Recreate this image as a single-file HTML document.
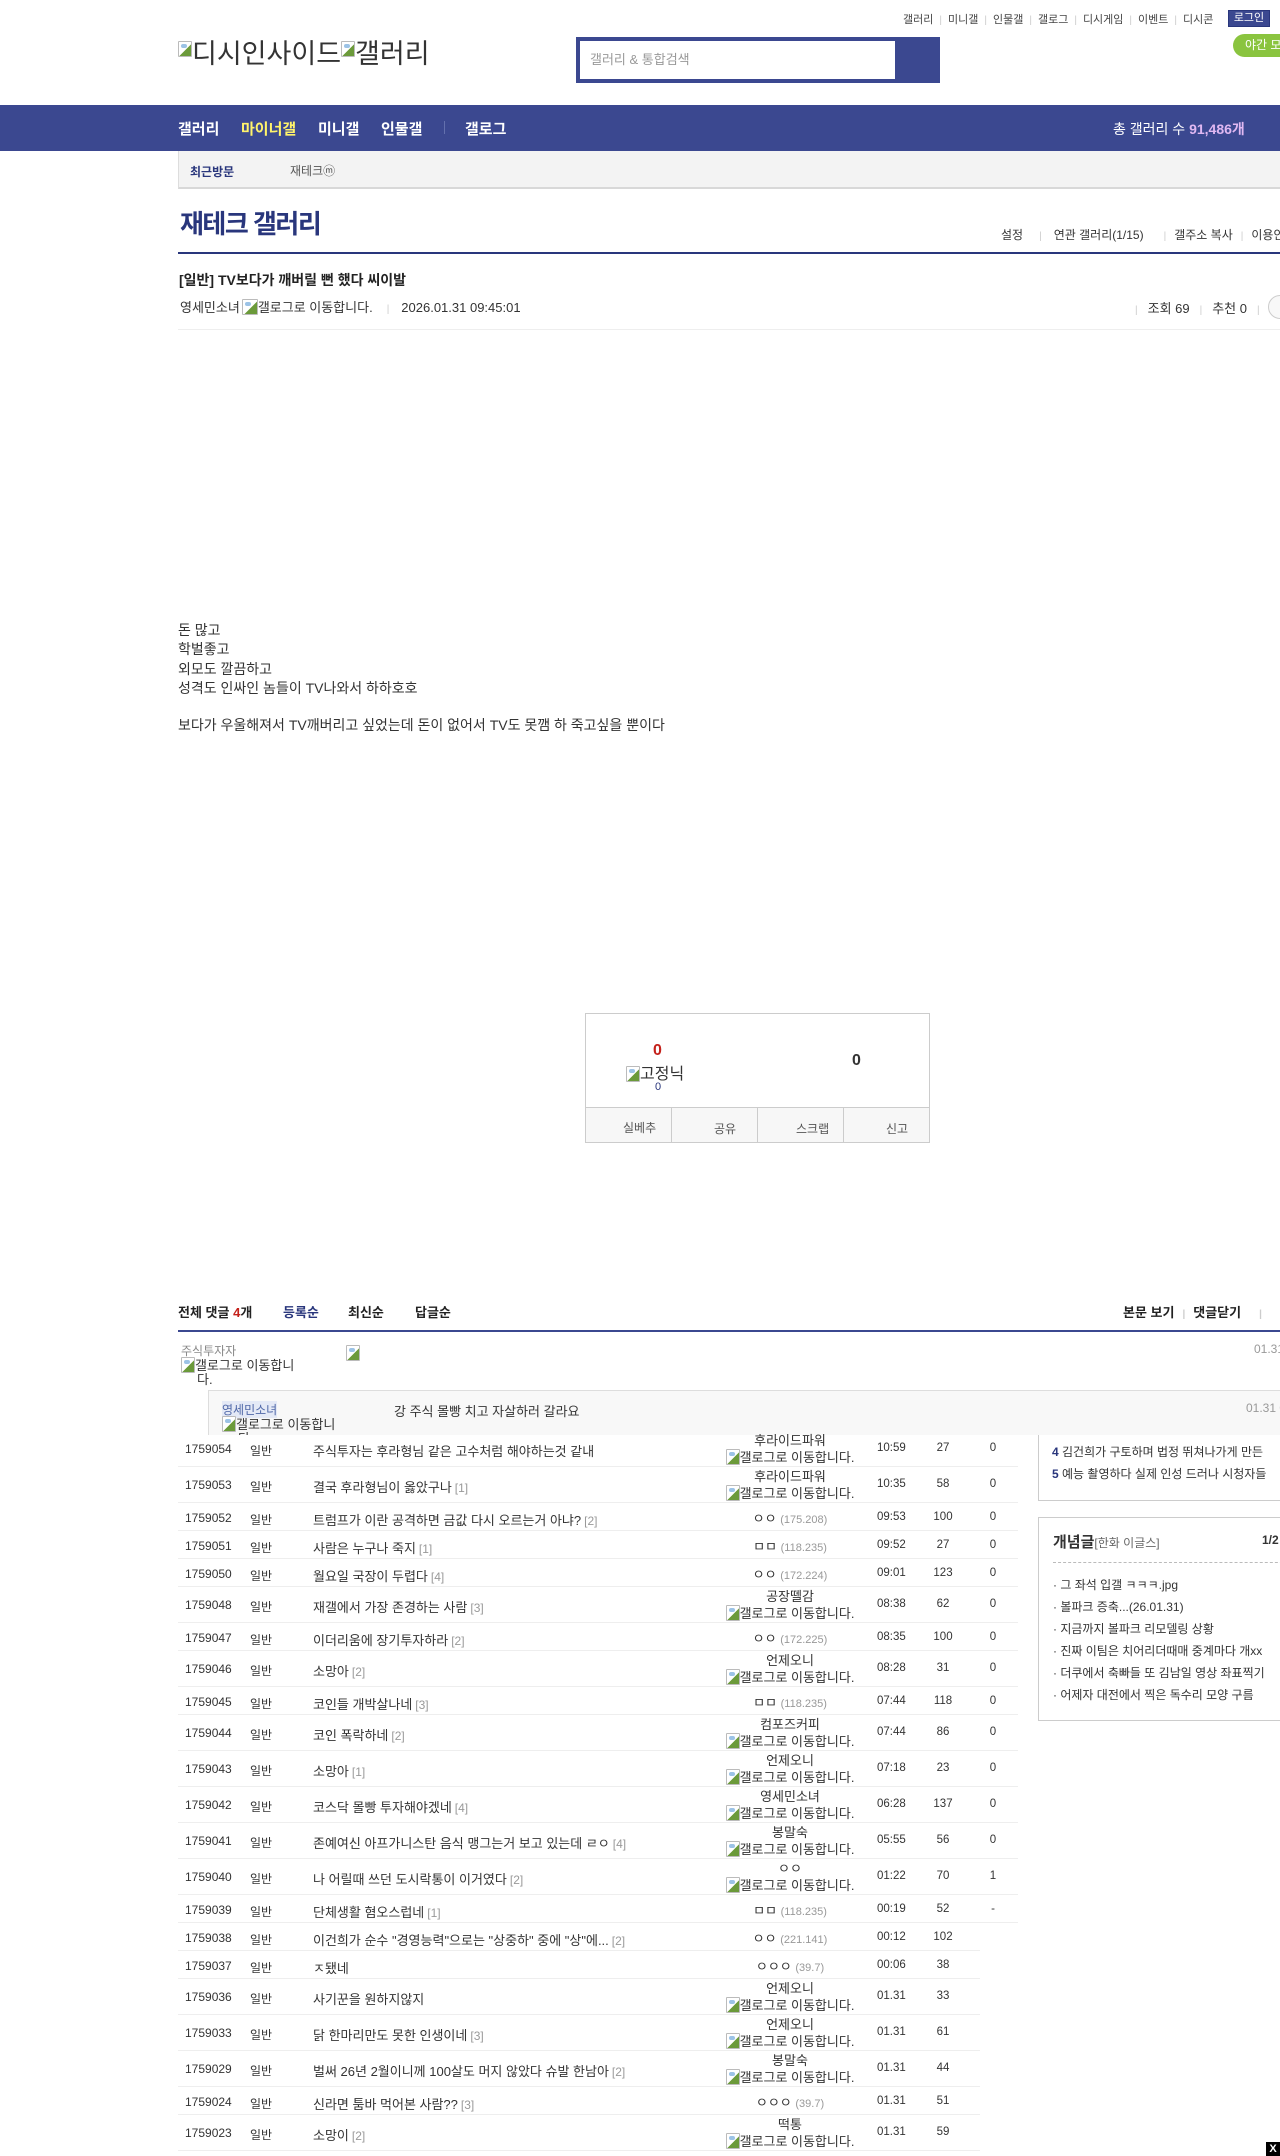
<!DOCTYPE html>
<html><head><meta charset="utf-8">
<style>
*{margin:0;padding:0;box-sizing:border-box}
html,body{width:1280px;height:2156px;overflow:hidden;background:#fff}
body{position:relative;font-family:"Liberation Sans","Noto Sans CJK KR",sans-serif;color:#333;font-size:13px}
.a{position:absolute;white-space:nowrap}
.bi{display:inline-block;width:14px;height:16px;vertical-align:-3px;position:relative;border:1px solid #bbb;border-radius:1px;background:linear-gradient(135deg,#fff 55%,#6b9a3a 56%);}
.bi:after{content:"";position:absolute;left:2px;top:2px;width:6px;height:4px;background:#9cc3e6;border-radius:3px}
.tl a{color:#444;font-size:11px}
.sep{color:#ccc;margin:0 4px;font-size:10px}
.tl .sep{margin:0 6px}
.row{position:absolute;left:178px;height:28px;border-bottom:1px solid #eee;font-size:12px}
.row .n{position:absolute;left:7px;top:8px;font-size:12px;color:#333}
.row .t{position:absolute;left:72px;top:8px}
.row .ti{position:absolute;left:135px;top:7px;font-size:13px}
.row .ti i{font-style:normal;color:#999;font-size:12px;margin-left:3px}
.row .w{position:absolute;left:536px;width:152px;text-align:center;top:7px;font-size:13px;line-height:17px}
.row .w i{font-style:normal;color:#999;font-size:11px}
.row .d{position:absolute;left:699px;top:8px;font-size:11.5px}
.row .v{position:absolute;left:740px;width:50px;text-align:center;top:8px;font-size:11.5px}
.row .r{position:absolute;left:790px;width:50px;text-align:center;top:8px;font-size:11.5px}
.tall{height:36px}
.tall .n,.tall .t,.tall .d,.tall .v,.tall .r{top:11px}
.tall .ti{top:10px}
.tall .w{top:1px}
</style></head><body>

<div class="a tl" style="left:903px;top:11px;">
<a>갤러리</a><span class="sep">|</span><a>미니갤</a><span class="sep">|</span><a>인물갤</a><span class="sep">|</span><a>갤로그</a><span class="sep">|</span><a>디시게임</a><span class="sep">|</span><a>이벤트</a><span class="sep">|</span><a>디시콘</a>
</div>
<div class="a" style="left:1228px;top:10px;width:42px;height:17px;background:#3b4890;border:1px solid #29367c;color:#fff;font-size:11px;text-align:center;line-height:15px">로그인</div>
<div class="a" style="left:1233px;top:34px;width:80px;height:23px;background:#8ac43f;border-radius:12px;color:#fff;font-size:12px;line-height:23px;padding-left:12px">야간 모드</div>

<div class="a" style="left:178px;top:38px;font-size:27px;color:#333;line-height:32px"><span class="bi" style="vertical-align:6px"></span>디시인사이드<span class="bi" style="vertical-align:6px"></span>갤러리</div>

<div class="a" style="left:576px;top:37px;width:364px;height:46px;background:#3b4890"></div>
<div class="a" style="left:580px;top:41px;width:315px;height:38px;background:#fff;color:#999;font-size:13px;line-height:38px;padding-left:10px">갤러리 &amp; 통합검색</div>

<div class="a" style="left:0;top:105px;width:1280px;height:46px;background:#3b4890"></div>
<div class="a" style="left:178px;top:118px;color:#fff;font-size:15px;font-weight:bold">갤러리</div>
<div class="a" style="left:241px;top:118px;color:#fff36b;font-size:15px;font-weight:bold">마이너갤</div>
<div class="a" style="left:318px;top:118px;color:#fff;font-size:15px;font-weight:bold">미니갤</div>
<div class="a" style="left:381px;top:118px;color:#fff;font-size:15px;font-weight:bold">인물갤</div>
<div class="a" style="left:444px;top:121px;width:1px;height:13px;background:#6370ad"></div>
<div class="a" style="left:465px;top:118px;color:#fff;font-size:15px;font-weight:bold">갤로그</div>
<div class="a" style="left:1113px;top:119px;color:#fff;font-size:14px">총 갤러리 수 <b style="color:#e0b8f2">91,486개</b></div>

<div class="a" style="left:178px;top:151px;width:1110px;height:38px;background:#f3f3f3;border-left:1px solid #ddd;border-bottom:2px solid #d8d8d8"></div>
<div class="a" style="left:190px;top:163px;color:#29367c;font-size:12px;font-weight:bold">최근방문</div>
<div class="a" style="left:290px;top:162px;color:#555;font-size:12px">재테크ⓜ</div>

<div class="a" style="left:180px;top:204px;color:#29367c;font-size:26px;font-weight:bold;letter-spacing:-1.5px">재테크 갤러리</div>
<div class="a" style="left:1001px;top:226px;font-size:12px;color:#333">설정<span class="sep" style="margin:0 12px 0 16px">|</span>연관 갤러리(1/15)<span class="sep" style="margin:0 8px 0 20px">|</span>갤주소 복사<span class="sep" style="margin:0 8px">|</span>이용안내</div>
<div class="a" style="left:178px;top:252px;width:1110px;height:2px;background:#29367c"></div>

<div class="a" style="left:179px;top:270px;font-size:14px;font-weight:bold;color:#222">[일반] TV보다가 깨버릴 뻔 했다 씨이발</div>
<div class="a" style="left:180px;top:297px;font-size:13px;color:#333">영세민소녀<span class="bi" style="margin-left:2px;width:16px"></span>갤로그로 이동합니다.<span class="sep" style="margin:0 12px 0 14px">|</span>2026.01.31 09:45:01</div>
<div class="a" style="left:1135px;top:298px;font-size:13px;color:#333"><span class="sep" style="margin:0 10px 0 0">|</span>조회 69<span class="sep" style="margin:0 10px">|</span>추천 0<span class="sep" style="margin:0 10px">|</span></div>
<div class="a" style="left:1268px;top:295px;width:24px;height:24px;border:1px solid #ccc;border-radius:12px;background:#f8f8f8"></div>
<div class="a" style="left:178px;top:329px;width:1110px;height:1px;background:#eee"></div>

<div class="a" style="left:178px;top:621px;font-size:14px;line-height:19.3px;color:#333">돈 많고<br>학벌좋고<br>외모도 깔끔하고<br>성격도 인싸인 놈들이 TV나와서 하하호호</div>
<div class="a" style="left:178px;top:715px;font-size:14px;color:#333">보다가 우울해져서 TV깨버리고 싶었는데 돈이 없어서 TV도 못깸 하 죽고싶을 뿐이다</div>

<div class="a" style="left:585px;top:1013px;width:345px;height:130px;border:1px solid #ccc;background:#fff"></div>
<div class="a" style="left:585px;top:1107px;width:345px;height:36px;border:1px solid #ccc;background:#f7f7f7"></div>
<div class="a" style="left:671px;top:1107px;width:1px;height:36px;background:#ccc"></div>
<div class="a" style="left:757px;top:1107px;width:1px;height:36px;background:#ccc"></div>
<div class="a" style="left:843px;top:1107px;width:1px;height:36px;background:#ccc"></div>
<div class="a" style="left:623px;top:1119px;font-size:12px;color:#555">실베추</div>
<div class="a" style="left:714px;top:1120px;font-size:12px;color:#555">공유</div>
<div class="a" style="left:796px;top:1120px;font-size:12px;color:#555">스크랩</div>
<div class="a" style="left:886px;top:1120px;font-size:12px;color:#555">신고</div>
<div class="a" style="left:653px;top:1042px;font-size:16px;font-weight:bold;color:#c4211b">0</div>
<div class="a" style="left:626px;top:1060px;font-size:16px;color:#333"><span class="bi"></span>고정닉</div>
<div class="a" style="left:655px;top:1081px;font-size:11px;color:#29367c">0</div>
<div class="a" style="left:852px;top:1052px;font-size:16px;font-weight:bold;color:#333">0</div>

<div class="a" style="left:178px;top:1302px;font-size:13px;font-weight:bold;color:#222">전체 댓글 <span style="color:#c4211b">4</span>개</div>
<div class="a" style="left:283px;top:1302px;font-size:13px;font-weight:bold;color:#29367c">등록순</div>
<div class="a" style="left:348px;top:1302px;font-size:13px;font-weight:bold;color:#222">최신순</div>
<div class="a" style="left:415px;top:1302px;font-size:13px;font-weight:bold;color:#222">답글순</div>
<div class="a" style="left:1123px;top:1302px;font-size:13px;font-weight:bold;color:#222">본문 보기<span class="sep" style="margin:0 8px">|</span>댓글닫기<span class="sep" style="margin:0 18px">|</span></div>
<div class="a" style="left:178px;top:1330px;width:1110px;height:2px;background:#3b4890"></div>

<div class="a" style="left:1038px;top:1380px;width:260px;height:121px;border:1px solid #ccc;background:#fff"></div>
<div class="a" style="left:1052px;top:1443px;font-size:12px;color:#333"><b style="color:#29367c">4</b> 김건희가 구토하며 법정 뛰쳐나가게 만든</div>
<div class="a" style="left:1052px;top:1465px;font-size:12px;color:#333"><b style="color:#29367c">5</b> 예능 촬영하다 실제 인성 드러나 시청자들</div>

<div class="a" style="left:0;top:1333px;width:1280px;height:102px;background:#fff"></div>
<div class="a" style="left:181px;top:1342px;font-size:12px;color:#888">주식투자자</div>
<div class="a" style="left:181px;top:1357px;font-size:13px;color:#333;line-height:13px"><span class="bi"></span>갤로그로 이동합니<br><span style="padding-left:16px">다.</span></div>
<div class="a" style="left:346px;top:1345px"><span class="bi"></span></div>
<div class="a" style="left:1254px;top:1342px;font-size:12px;color:#999">01.31 09:5</div>
<div class="a" style="left:208px;top:1390px;width:1080px;height:45px;background:#f8f8f8;border-top:1px solid #ddd;border-left:1px solid #ddd;overflow:hidden">
 <div class="a" style="left:13px;top:10px;font-size:12px;color:#5068a8;background:#e4e9f6">영세민소녀</div>
 <div class="a" style="left:13px;top:25px;font-size:13px;color:#333;line-height:13px"><span class="bi"></span>갤로그로 이동합니<br><span style="padding-left:16px">다.</span></div>
 <div class="a" style="left:185px;top:10px;font-size:13px;color:#333">강 주식 몰빵 치고 자살하러 갈라요</div>
 <div class="a" style="left:1037px;top:10px;font-size:12px;color:#999">01.31 09:5</div>
</div>

<div class="a" style="left:1038px;top:1517px;width:260px;height:204px;border:1px solid #ccc;background:#fff"></div>
<div class="a" style="left:1053px;top:1531px;font-size:15px;font-weight:bold;color:#333">개념글<span style="font-size:12px;font-weight:normal;color:#666">[한화 이글스]</span></div>
<div class="a" style="left:1262px;top:1533px;font-size:12px;font-weight:bold;color:#333">1/2</div>
<div class="a" style="left:1053px;top:1562px;width:240px;border-top:1px dashed #bbb"></div>
<div class="a" style="left:1053px;top:1574px;font-size:12px;line-height:22px;color:#333">· 그 좌석 입갤 ㅋㅋㅋ.jpg<br>· 볼파크 증축...(26.01.31)<br>· 지금까지 볼파크 리모델링 상황<br>· 진짜 이팀은 치어리더때매 중계마다 개xx<br>· 더쿠에서 축빠들 또 김남일 영상 좌표찍기<br>· 어제자 대전에서 찍은 독수리 모양 구름</div>

<div class="row tall" style="top:1431px;width:840px"><span class="n">1759054</span><span class="t">일반</span><span class="ti">주식투자는 후라형님 같은 고수처럼 해야하는것 같내</span><span class="w">후라이드파워<br><span class="bi"></span>갤로그로 이동합니다.</span><span class="d">10:59</span><span class="v">27</span><span class="r">0</span></div>
<div class="row tall" style="top:1467px;width:840px"><span class="n">1759053</span><span class="t">일반</span><span class="ti">결국 후라형님이 옳았구나<i>[1]</i></span><span class="w">후라이드파워<br><span class="bi"></span>갤로그로 이동합니다.</span><span class="d">10:35</span><span class="v">58</span><span class="r">0</span></div>
<div class="row" style="top:1503px;width:840px"><span class="n">1759052</span><span class="t">일반</span><span class="ti">트럼프가 이란 공격하면 금값 다시 오르는거 아냐?<i>[2]</i></span><span class="w">ㅇㅇ <i>(175.208)</i></span><span class="d">09:53</span><span class="v">100</span><span class="r">0</span></div>
<div class="row" style="top:1531px;width:840px"><span class="n">1759051</span><span class="t">일반</span><span class="ti">사람은 누구나 죽지<i>[1]</i></span><span class="w">ㅁㅁ <i>(118.235)</i></span><span class="d">09:52</span><span class="v">27</span><span class="r">0</span></div>
<div class="row" style="top:1559px;width:840px"><span class="n">1759050</span><span class="t">일반</span><span class="ti">월요일 국장이 두렵다<i>[4]</i></span><span class="w">ㅇㅇ <i>(172.224)</i></span><span class="d">09:01</span><span class="v">123</span><span class="r">0</span></div>
<div class="row tall" style="top:1587px;width:840px"><span class="n">1759048</span><span class="t">일반</span><span class="ti">재갤에서 가장 존경하는 사람<i>[3]</i></span><span class="w">공장뗄감<br><span class="bi"></span>갤로그로 이동합니다.</span><span class="d">08:38</span><span class="v">62</span><span class="r">0</span></div>
<div class="row" style="top:1623px;width:840px"><span class="n">1759047</span><span class="t">일반</span><span class="ti">이더리움에 장기투자하라<i>[2]</i></span><span class="w">ㅇㅇ <i>(172.225)</i></span><span class="d">08:35</span><span class="v">100</span><span class="r">0</span></div>
<div class="row tall" style="top:1651px;width:840px"><span class="n">1759046</span><span class="t">일반</span><span class="ti">소망아<i>[2]</i></span><span class="w">언제오니<br><span class="bi"></span>갤로그로 이동합니다.</span><span class="d">08:28</span><span class="v">31</span><span class="r">0</span></div>
<div class="row" style="top:1687px;width:840px"><span class="n">1759045</span><span class="t">일반</span><span class="ti">코인들 개박살나네<i>[3]</i></span><span class="w">ㅁㅁ <i>(118.235)</i></span><span class="d">07:44</span><span class="v">118</span><span class="r">0</span></div>
<div class="row tall" style="top:1715px;width:840px"><span class="n">1759044</span><span class="t">일반</span><span class="ti">코인 폭락하네<i>[2]</i></span><span class="w">컴포즈커피<br><span class="bi"></span>갤로그로 이동합니다.</span><span class="d">07:44</span><span class="v">86</span><span class="r">0</span></div>
<div class="row tall" style="top:1751px;width:840px"><span class="n">1759043</span><span class="t">일반</span><span class="ti">소망아<i>[1]</i></span><span class="w">언제오니<br><span class="bi"></span>갤로그로 이동합니다.</span><span class="d">07:18</span><span class="v">23</span><span class="r">0</span></div>
<div class="row tall" style="top:1787px;width:840px"><span class="n">1759042</span><span class="t">일반</span><span class="ti">코스닥 몰빵 투자해야겠네<i>[4]</i></span><span class="w">영세민소녀<br><span class="bi"></span>갤로그로 이동합니다.</span><span class="d">06:28</span><span class="v">137</span><span class="r">0</span></div>
<div class="row tall" style="top:1823px;width:840px"><span class="n">1759041</span><span class="t">일반</span><span class="ti">존예여신 아프가니스탄 음식 맹그는거 보고 있는데 ㄹㅇ<i>[4]</i></span><span class="w">봉말숙<br><span class="bi"></span>갤로그로 이동합니다.</span><span class="d">05:55</span><span class="v">56</span><span class="r">0</span></div>
<div class="row tall" style="top:1859px;width:840px"><span class="n">1759040</span><span class="t">일반</span><span class="ti">나 어릴때 쓰던 도시락통이 이거였다<i>[2]</i></span><span class="w">ㅇㅇ<br><span class="bi"></span>갤로그로 이동합니다.</span><span class="d">01:22</span><span class="v">70</span><span class="r">1</span></div>
<div class="row" style="top:1895px;width:840px"><span class="n">1759039</span><span class="t">일반</span><span class="ti">단체생활 혐오스럽네<i>[1]</i></span><span class="w">ㅁㅁ <i>(118.235)</i></span><span class="d">00:19</span><span class="v">52</span><span class="r">-</span></div>
<div class="row" style="top:1923px;width:802px"><span class="n">1759038</span><span class="t">일반</span><span class="ti">이건희가 순수 "경영능력"으로는 "상중하" 중에 "상"에...<i>[2]</i></span><span class="w">ㅇㅇ <i>(221.141)</i></span><span class="d">00:12</span><span class="v">102</span></div>
<div class="row" style="top:1951px;width:802px"><span class="n">1759037</span><span class="t">일반</span><span class="ti">ㅈ됐네</span><span class="w">ㅇㅇㅇ <i>(39.7)</i></span><span class="d">00:06</span><span class="v">38</span></div>
<div class="row tall" style="top:1979px;width:802px"><span class="n">1759036</span><span class="t">일반</span><span class="ti">사기꾼을 원하지않지</span><span class="w">언제오니<br><span class="bi"></span>갤로그로 이동합니다.</span><span class="d">01.31</span><span class="v">33</span></div>
<div class="row tall" style="top:2015px;width:802px"><span class="n">1759033</span><span class="t">일반</span><span class="ti">닭 한마리만도 못한 인생이네<i>[3]</i></span><span class="w">언제오니<br><span class="bi"></span>갤로그로 이동합니다.</span><span class="d">01.31</span><span class="v">61</span></div>
<div class="row tall" style="top:2051px;width:802px"><span class="n">1759029</span><span class="t">일반</span><span class="ti">벌써 26년 2월이니께 100살도 머지 않았다 슈발 한남아<i>[2]</i></span><span class="w">봉말숙<br><span class="bi"></span>갤로그로 이동합니다.</span><span class="d">01.31</span><span class="v">44</span></div>
<div class="row" style="top:2087px;width:802px"><span class="n">1759024</span><span class="t">일반</span><span class="ti">신라면 툼바 먹어본 사람??<i>[3]</i></span><span class="w">ㅇㅇㅇ <i>(39.7)</i></span><span class="d">01.31</span><span class="v">51</span></div>
<div class="row tall" style="top:2115px;width:802px"><span class="n">1759023</span><span class="t">일반</span><span class="ti">소망이<i>[2]</i></span><span class="w">떡통<br><span class="bi"></span>갤로그로 이동합니다.</span><span class="d">01.31</span><span class="v">59</span></div>

<div class="a" style="left:1266px;top:2142px;width:14px;height:14px;background:#000;color:#fff;font-size:11px;font-weight:bold;text-align:center;line-height:14px">X</div>
</body></html>
